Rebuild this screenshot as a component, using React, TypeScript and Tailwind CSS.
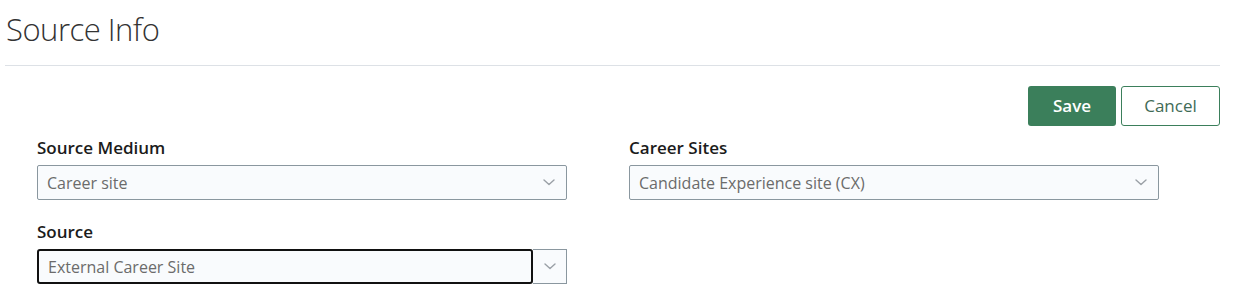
import { clsx } from 'clsx';

function Chevron() {
  return (
    <svg width="12" height="7" viewBox="0 0 12 7" fill="none" className="shrink-0">
      <path d="M1 1l5 4.5L11 1" stroke="#9aa0a6" strokeWidth="1.4" strokeLinecap="round" strokeLinejoin="round" />
    </svg>
  );
}

interface SelectProps {
  label: string;
  value: string;
  focused?: boolean;
}

function SelectField({ label, value, focused }: SelectProps) {
  return (
    <div className="flex flex-col">
      <label className="text-[17px] font-semibold text-[#1b1b1b] leading-[22px] mb-[6px]">{label}</label>
      {focused ? (
        <div className="flex h-[35px] w-[530px]">
          <div className="flex-1 flex items-center px-[9px] bg-[#f9fbfd] border-2 border-[#111] rounded-[3px] text-[16px] text-[#6b6b6b]">
            {value}
          </div>
          <div className="w-[34px] flex items-center justify-center bg-[#f9fbfd] border border-l-0 border-[#8a979f]">
            <Chevron />
          </div>
        </div>
      ) : (
        <div className="flex items-center justify-between h-[35px] w-[530px] pl-[9px] pr-[11px] bg-[#f9fbfd] border border-[#8a979f] rounded-[2px] text-[16px] text-[#6b6b6b]">
          <span>{value}</span>
          <Chevron />
        </div>
      )}
    </div>
  );
}

export default function App() {
  return (
    <div className="w-full h-[306px] bg-white overflow-hidden font-['Open_Sans',sans-serif]">
      <div className="px-[5px] pr-[18px]">
        <h1 className="pl-[1px] pt-[8px] h-[65px] text-[31px] font-light text-[#333] leading-[42px] tracking-[-0.5px]">
          Source Info
        </h1>
        <div className="h-px bg-[#dde1e6]" />
        <div className="flex justify-end gap-[5px] pt-[20px]">
          <button className={clsx('h-[40px] w-[88px] rounded-[3px] bg-[#3b7f5b] text-white text-[17px] font-semibold')}>
            Save
          </button>
          <button className="h-[40px] w-[99px] rounded-[3px] bg-white border border-[#3b7f5b] text-[#3f6b56] text-[17px]">
            Cancel
          </button>
        </div>
      </div>
      <div className="grid grid-cols-[530px_530px] gap-x-[62px] gap-y-[21px] pl-[37px] mt-[11px]">
        <SelectField label="Source Medium" value="Career site" />
        <SelectField label="Career Sites" value="Candidate Experience site (CX)" />
        <SelectField label="Source" value="External Career Site" focused />
      </div>
    </div>
  );
}
